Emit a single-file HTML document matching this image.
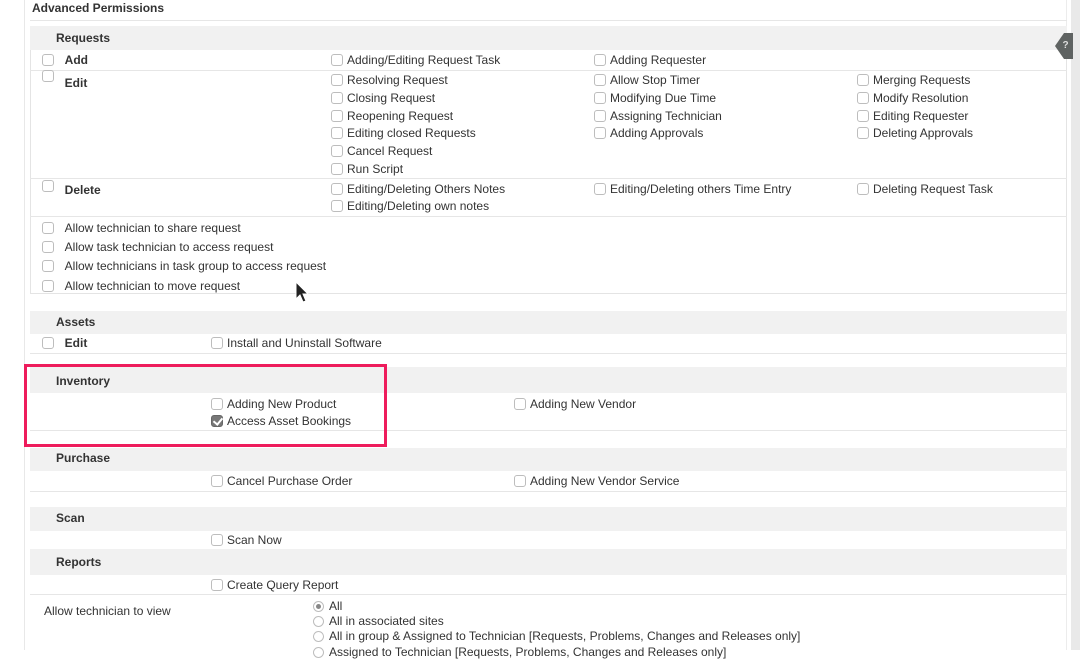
<!DOCTYPE html>
<html><head><meta charset="utf-8"><style>
*{margin:0;padding:0;box-sizing:border-box}
body{width:1080px;height:650px;overflow:hidden;background:#fff;font-family:"Liberation Sans",sans-serif;font-size:12px;color:#333;position:relative}
.a{position:absolute}
.i{position:absolute;line-height:16px;white-space:nowrap}
.i i{display:inline-block;width:12px;height:12px;border:1px solid #bdbdbd;border-radius:3px;vertical-align:-2px;margin-right:4px;background:#fff}
.i i.c{background:#777;border-color:#666;position:relative}
.i i.c:after{content:"";position:absolute;left:3px;top:0px;width:4px;height:7px;border:solid #fff;border-width:0 2px 2px 0;transform:rotate(40deg)}
.i i.r{border-radius:50%;width:11px;height:11px;margin-right:5px}
.i i.rs{position:relative}
.i i.rs:after{content:"";position:absolute;left:2px;top:2px;width:5px;height:5px;border-radius:50%;background:#888}
.b{font-weight:bold}
.h{position:absolute;left:30px;width:1037px;background:#f1f1f1}
.ln{position:absolute;left:30px;width:1037px;height:1px;background:#e6e6e6}
.box{position:absolute;border:1px solid #e4e4e4}
.help{position:absolute;left:1055px;top:33px;width:18px;height:26px;background:#5f6362;clip-path:polygon(100% 0,100% 100%,50% 100%,0 50%,50% 0);color:#ddd;font-weight:bold;font-size:10px;line-height:26px;text-align:center;padding-left:3px;z-index:5}
</style></head><body>
<div class="a" style="left:24px;top:0;width:1px;height:650px;background:#e8e8e8"></div>
<div class="a" style="left:1071px;top:0;width:9px;height:650px;background:#e9e9e9"></div>
<div class="a" style="left:1066px;top:0;width:1px;height:650px;background:#ececec"></div>
<div class="help">?</div>
<div class="i b" style="left:32px;top:0px;font-size:12px">Advanced Permissions</div>
<div class="ln" style="top:20px"></div>

<div class="box" style="left:30px;top:26px;width:1037px;height:268px"></div>
<div class="h" style="top:26px;height:24px"></div>
<div class="i b" style="left:56px;top:30px">Requests</div>
<div class="ln" style="top:70px"></div>
<div class="ln" style="top:178px"></div>
<div class="ln" style="top:216px"></div>

<div class="i b" style="left:42px;top:52px"><i></i>&nbsp;&nbsp;Add</div>
<div class="i" style="left:331px;top:52px"><i></i>Adding/Editing Request Task</div>
<div class="i" style="left:594px;top:52px"><i></i>Adding Requester</div>

<div class="i b" style="left:42px;top:70px"><i style="vertical-align:2px"></i>&nbsp;&nbsp;<span style="position:relative;top:3px">Edit</span></div>
<div class="i" style="left:331px;top:72px"><i></i>Resolving Request</div>
<div class="i" style="left:331px;top:90px"><i></i>Closing Request</div>
<div class="i" style="left:331px;top:108px"><i></i>Reopening Request</div>
<div class="i" style="left:331px;top:125px"><i></i>Editing closed Requests</div>
<div class="i" style="left:331px;top:143px"><i></i>Cancel Request</div>
<div class="i" style="left:331px;top:161px"><i></i>Run Script</div>
<div class="i" style="left:594px;top:72px"><i></i>Allow Stop Timer</div>
<div class="i" style="left:594px;top:90px"><i></i>Modifying Due Time</div>
<div class="i" style="left:594px;top:108px"><i></i>Assigning Technician</div>
<div class="i" style="left:594px;top:125px"><i></i>Adding Approvals</div>
<div class="i" style="left:857px;top:72px"><i></i>Merging Requests</div>
<div class="i" style="left:857px;top:90px"><i></i>Modify Resolution</div>
<div class="i" style="left:857px;top:108px"><i></i>Editing Requester</div>
<div class="i" style="left:857px;top:125px"><i></i>Deleting Approvals</div>

<div class="i b" style="left:42px;top:178px"><i></i>&nbsp;&nbsp;<span style="position:relative;top:4px">Delete</span></div>
<div class="i" style="left:331px;top:181px"><i></i>Editing/Deleting Others Notes</div>
<div class="i" style="left:331px;top:198px"><i></i>Editing/Deleting own notes</div>
<div class="i" style="left:594px;top:181px"><i></i>Editing/Deleting others Time Entry</div>
<div class="i" style="left:857px;top:181px"><i></i>Deleting Request Task</div>

<div class="i" style="left:42px;top:220px"><i></i>&nbsp;&nbsp;Allow technician to share request</div>
<div class="i" style="left:42px;top:239px"><i></i>&nbsp;&nbsp;Allow task technician to access request</div>
<div class="i" style="left:42px;top:258px"><i></i>&nbsp;&nbsp;Allow technicians in task group to access request</div>
<div class="i" style="left:42px;top:278px"><i></i>&nbsp;&nbsp;Allow technician to move request</div>

<svg class="a" style="left:294px;top:281px" width="16" height="24"><path d="M2 1 L2 18 L6 14 L9 21 L12 20 L9 13 L14 13 Z" fill="#222" stroke="#fff" stroke-width="1"/></svg>

<div class="h" style="top:311px;height:23px"></div>
<div class="i b" style="left:56px;top:314px">Assets</div>
<div class="i b" style="left:42px;top:335px"><i></i>&nbsp;&nbsp;Edit</div>
<div class="i" style="left:211px;top:335px"><i></i>Install and Uninstall Software</div>
<div class="ln" style="top:353px"></div>

<div class="h" style="top:367px;height:26px"></div>
<div class="i b" style="left:56px;top:373px">Inventory</div>
<div class="i" style="left:211px;top:396px"><i></i>Adding New Product</div>
<div class="i" style="left:211px;top:413px"><i class="c"></i>Access Asset Bookings</div>
<div class="i" style="left:514px;top:396px"><i></i>Adding New Vendor</div>
<div class="ln" style="top:430px"></div>
<div class="a" style="left:24px;top:364px;width:363px;height:83px;border:3px solid #ee1c5c"></div>

<div class="h" style="top:448px;height:23px"></div>
<div class="i b" style="left:56px;top:450px">Purchase</div>
<div class="i" style="left:211px;top:473px"><i></i>Cancel Purchase Order</div>
<div class="i" style="left:514px;top:473px"><i></i>Adding New Vendor Service</div>
<div class="ln" style="top:491px"></div>

<div class="h" style="top:507px;height:24px"></div>
<div class="i b" style="left:56px;top:510px">Scan</div>
<div class="i" style="left:211px;top:532px"><i></i>Scan Now</div>
<div class="h" style="top:549px;height:26px"></div>
<div class="i b" style="left:56px;top:554px">Reports</div>
<div class="i" style="left:211px;top:577px"><i></i>Create Query Report</div>
<div class="ln" style="top:594px"></div>

<div class="i" style="left:44px;top:603px">Allow technician to view</div>
<div class="i" style="left:313px;top:598px"><i class="r rs"></i>All</div>
<div class="i" style="left:313px;top:613px"><i class="r"></i>All in associated sites</div>
<div class="i" style="left:313px;top:628px"><i class="r"></i>All in group &amp; Assigned to Technician [Requests, Problems, Changes and Releases only]</div>
<div class="i" style="left:313px;top:644px"><i class="r"></i>Assigned to Technician [Requests, Problems, Changes and Releases only]</div>
</body></html>
